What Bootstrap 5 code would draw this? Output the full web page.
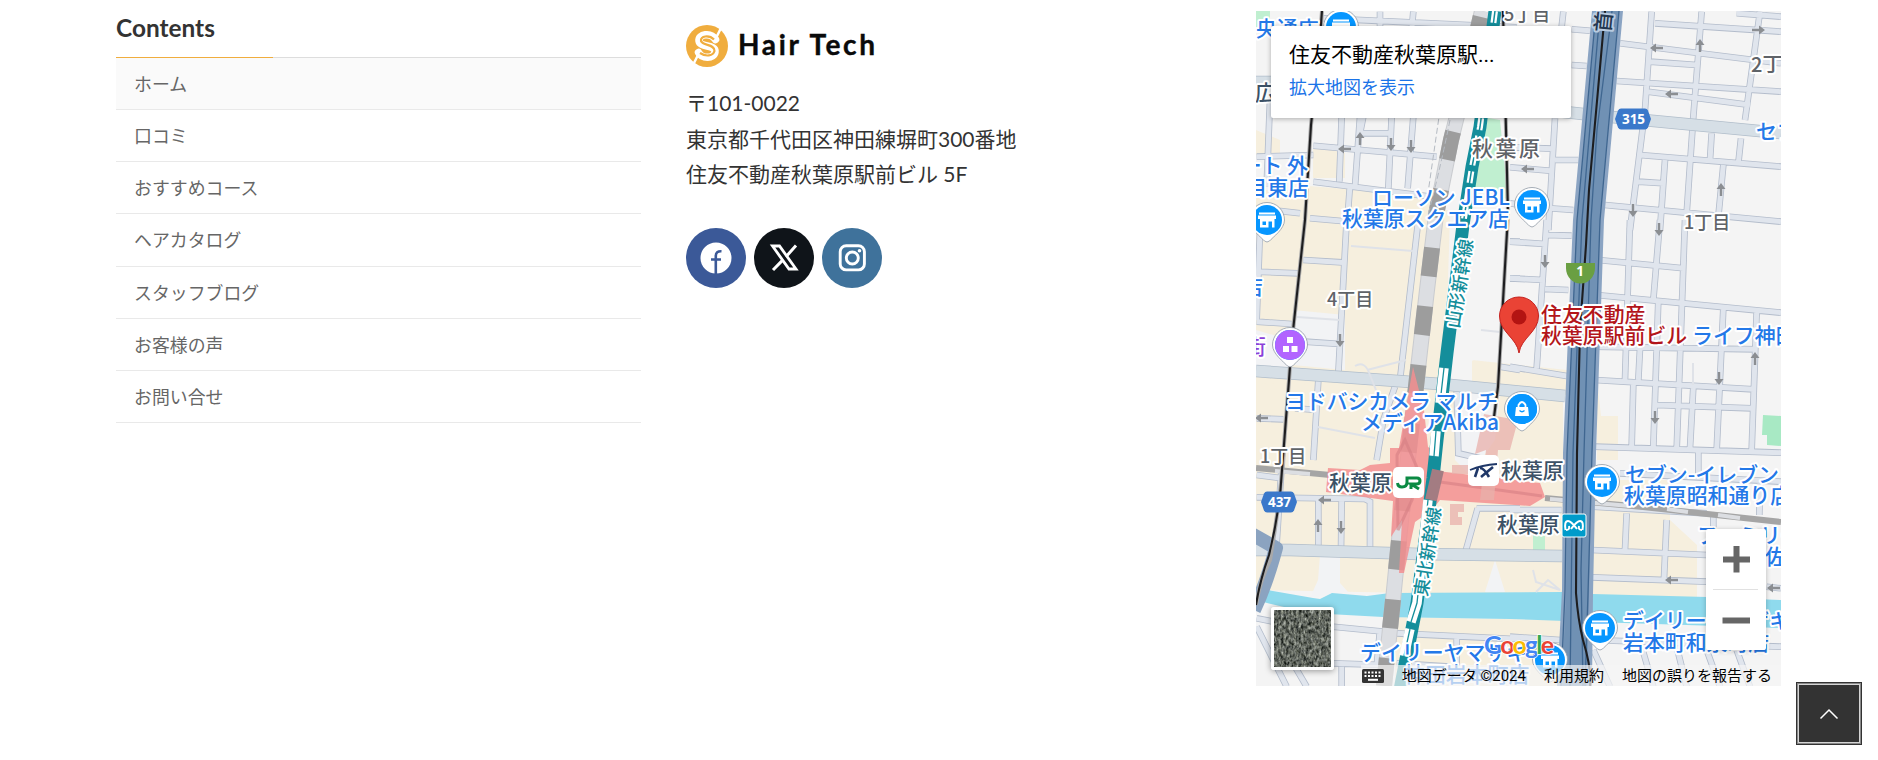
<!DOCTYPE html>
<html lang="ja">
<head>
<meta charset="utf-8">
<meta name="viewport" content="width=device-width, initial-scale=1">
<title>Hair Tech</title>
<link href="https://cdn.jsdelivr.net/npm/bootstrap@5.3.0/dist/css/bootstrap.min.css" rel="stylesheet">
<style>
body{font-family:Lato,"Noto Sans CJK JP",sans-serif;color:#333;font-size:21px;height:760px;overflow:hidden}
.site-foot{width:1710px;margin-left:93.5px;--bs-gutter-x:45px}
.foot-title{font-size:24.4px;font-weight:700;height:58px;line-height:1;padding-top:16px;border-bottom:1px solid #ddd;position:relative;margin:0}
.foot-title::after{content:"";position:absolute;left:0;bottom:-1px;width:30%;height:1px;background:#f0ad3e}
.menu-list .nav-link{font-size:17.9px;color:#666;height:52.15px;line-height:53px;padding:0 18px;border-bottom:1px solid #e9e9e9}
.menu-list .nav-link.active{background:#fafafa}
.addr{line-height:35.6px;margin:17px 0 36px}
.sns a{width:60px;height:60px}
.map-box{height:675px;margin-top:11px;width:525px;font-family:Roboto,"Noto Sans CJK JP",sans-serif}
.info-card{left:15px;top:15px;width:300px;height:92px;padding:14px 18px;box-shadow:0 1px 5px rgba(0,0,0,.3);border-radius:2px;line-height:30px;color:#000}
.info-card a{font-size:18px;color:#1a73e8;line-height:36px}
.zoom-ctl{left:450px;top:518px;width:60px;height:121px;box-shadow:0 1px 5px rgba(0,0,0,.25);border-radius:2px}
.zoom-ctl hr{width:45px;margin:0;opacity:1;border-color:#e1e1e1}
.sat{left:15px;top:596px;width:63px;height:63px;border:3px solid #fff;border-radius:3px;box-shadow:0 1px 6px rgba(0,0,0,.4)}
.map-foot{right:0;bottom:0;height:21px;width:420px;background:rgba(245,245,245,.7);font-size:15px;color:#000;line-height:22px;padding-right:9px;gap:18px}
.to-top{left:1796px;top:682px;width:66px;height:63px;background:#333;border:1px solid #333;box-shadow:inset 0 0 0 1px #888,inset 0 0 0 2px #d5d5d5}
.lb text{font-family:"Noto Sans CJK JP",sans-serif;font-weight:500;font-size:20.9px;paint-order:stroke;stroke:#fff;stroke-width:4px;stroke-linejoin:round}
.poi{fill:#2378e8}.chome{fill:#5f6368}.stn{fill:#3c5166}.dest{fill:#b3151a}.teal{fill:#148e9b}
#minor path{vector-effect:non-scaling-stroke}
</style>
</head>
<body>
<div class="row site-foot">
  <div class="col-4">
    <h3 class="foot-title">Contents</h3>
    <nav class="nav flex-column menu-list">
      <a class="nav-link active" href="#">ホーム</a>
      <a class="nav-link" href="#">口コミ</a>
      <a class="nav-link" href="#">おすすめコース</a>
      <a class="nav-link" href="#">ヘアカタログ</a>
      <a class="nav-link" href="#">スタッフブログ</a>
      <a class="nav-link" href="#">お客様の声</a>
      <a class="nav-link" href="#">お問い合せ</a>
    </nav>
  </div>
  <div class="col-4">
    <svg class="d-block" style="margin-top:24px" width="200" height="44" viewBox="0 0 200 44">
      <circle cx="21" cy="22" r="21" fill="#f0ad3e"/>
      <path d="M35 4L30 14M12 31L7 41" fill="none" stroke="#fff" stroke-width="2.500"/>
      <path d="M29.500 15.500C25 8 12 10 13 17C14 24 30 20 29 28C28 35 16 35 12.500 28.500" fill="none" stroke="#fff" stroke-width="7.500" stroke-linecap="round"/>
      <path d="M28 15.500C23 10.500 14 12 15 17C17 22 29 20 28.500 27C27 32 20 33 14 29" fill="none" stroke="#f0ad3e" stroke-width="2.200"/>
      <text x="52" y="31" font-size="28" font-weight="700" fill="#0a0a0a" stroke="#0a0a0a" stroke-width=".4" textLength="137">Hair Tech</text>
    </svg>
    <p class="addr">〒101-0022<br>東京都千代田区神田練塀町300番地<br>住友不動産秋葉原駅前ビル 5F</p>
    <div class="d-flex sns" style="gap:8px">
      <a href="#" class="rounded-circle" style="background:#3b5998"><svg class="d-block" width="60" height="60"><circle cx="30" cy="30" r="15.500" fill="#fff"/><path d="M29.800 46V28Q29.800 23 35.500 23.300M25 31.500H35" fill="none" stroke="#3b5998" stroke-width="2.600"/></svg></a>
      <a href="#" class="rounded-circle" style="background:#0f1419"><svg class="d-block" width="60" height="60"><path d="M42 17.500L32 28.700M28.200 32.600L19 42" stroke="#fff" stroke-width="3"/><path d="M18.500 18H25.500L42 41H35Z" fill="none" stroke="#fff" stroke-width="2.800"/></svg></a>
      <a href="#" class="rounded-circle" style="background:#3f729b"><svg class="d-block" width="60" height="60"><g fill="none" stroke="#fff" stroke-width="2.900"><rect x="18.200" y="17.700" width="24.200" height="24.200" rx="6"/><circle cx="30.300" cy="30" r="6"/></g><circle cx="37.500" cy="22.800" r="1.800" fill="#fff"/></svg></a>
    </div>
  </div>
  <div class="col-4">
    <div class="map-box position-relative overflow-hidden">
      <svg class="d-block" width="525" height="675" viewBox="1256 11 525 675">
        <defs>
          <g id="minor" fill="none">
            <path transform="translate(1250 0) scale(.33333)" d="M220 55L800 82M390 35V90M490 35L485 90M190 437L560 470M190 545L545 590M335 400H430M340 350L330 400M275 350L268 545M330 350L315 560M425 350L415 565M490 350L473 565M20 470L190 465M60 300L50 560M300 555L290 690M20 625L150 640M180 655L300 665"/>
            <path transform="translate(1510 0) scale(.33333)" d="M425 35L405 330L360 690M575 35L550 350L530 640M750 35L705 360M435 70L813 95M680 40L813 50M330 130L813 190M420 185L560 195M320 243L813 275M415 275L720 315M390 465L813 500M605 400L600 480M693 415L685 490M465 480L450 690M640 495L625 650M385 545L460 550M285 615L813 665M160 35L155 80M135 355L115 690M135 480H205M0 502L120 512M120 625L190 630M185 195L230 198M185 88L240 92M0 442L130 446M0 610L30 615"/>
            <path transform="translate(1250 220) scale(.33333)" d="M30 30L20 300M290 0L265 460M505 0L450 480M160 120L290 128M20 155L145 160M20 305L125 312M165 365L270 372M20 595L100 598M205 480L190 720M135 565L200 570M780 175H810M750 440L810 450M780 65H810M435 500L400 600L380 720M620 510L625 700L690 715"/>
            <path transform="translate(1510 220) scale(.33333)" d="M110 0L80 445M360 0L345 480M450 0L430 240M445 240L430 680M525 0L500 690M265 120L520 145M260 225L813 278M0 65L105 72M0 175L100 180M110 45L185 47M105 207L175 210M0 440L170 468M250 380L740 388M255 480L730 508M255 680L813 698M440 555L725 565M740 275L725 690M640 265L620 690M550 500L540 685M370 490L365 680M390 385L385 480"/>
            <path transform="translate(1250 450) scale(.33333)" d="M205 148V300M275 150L273 300M360 300V155L345 147L20 142M683 175L648 300M680 175H810M98 0L80 280M20 75L95 85M250 530L405 545M250 640L400 645M390 540L380 650M275 650V710M440 550L810 568M20 530L110 710M100 590L170 710M20 505L70 515M440 640L600 650M620 560V700"/>
            <path transform="translate(1510 450) scale(.33333)" d="M565 0V80M330 70L813 95M250 170L590 190M350 190L345 300M245 300L590 315M470 210L462 385M245 382L590 395M250 570L813 590M395 590L430 710M500 590L530 710M590 600L630 710M680 600L720 710M770 410L813 415M610 200V240M750 100L748 195M0 180H155M250 600L300 710M0 560L150 570"/>
          </g>
          <g id="major" fill="none"><path d="M1256 371L1440 384L1565 396M1256 550H1290L1420 554L1562 556M1612 117L1781 133M1520 107L1583 114M1256 82H1275"/></g>
          <g id="shop"><path d="M-17.500 0A17.500 17.500 0 1 1 17.500 0C17.500 9 6 17 2.500 21Q0 23-2.500 21C-6 17-17.500 9-17.500 0Z" fill="#fff" stroke="#8f99a5" stroke-width=".8"/><circle r="15" fill="#0696ff"/><path d="M-8-7.500H8V-5.500H-8ZM-9-4.500H9V-1H7.500V7.500H5V1.500H1.500V7.500H-7V-1H-9Z" fill="#fff"/><path d="M-4.500 1.500H-1V5H-4.500Z" fill="#0696ff"/></g>
          <path id="arr" d="M-6-1.200H1V-4.500L7 0L1 4.500V1.200H-6Z" fill="#8b8e92"/>
          <path id="hex" d="M-12-10.500H12Q14-10.500 15-8.500L18 0L15 8.500Q14 10.500 12 10.500H-12Q-14 10.500-15 8.500L-18 0L-15-8.500Q-14-10.500-12-10.500Z" fill="#3a78ca"/>
        </defs>
        <rect x="1256" y="11" width="525" height="675" fill="#f4f4f4"/>
        <g fill="#f6efde">
          <path d="M1256 130L1280 140V155H1256ZM1313 146L1345 153V178H1313ZM1308 186L1440 196L1428 345L1415 375L1340 360L1345 220H1256V190H1300ZM1256 210H1450V370L1430 390H1256ZM1430 250L1444 260L1436 345H1425Z"/>
          <path d="M1256 383L1440 388L1563 400V596L1256 590ZM1472 360L1567 370V395L1472 385ZM1597 380L1601 416H1618V460H1597Z"/>
          <path d="M1594 480H1670V520L1697 545V597H1592ZM1395 617L1560 620V686H1395Z"/>
        </g>
        <path d="M1450 214H1500L1492 350L1470 362V385L1445 382Z" fill="#f4f4f4"/>
        <path d="M1293 310L1345 315V370L1293 365ZM1256 330L1290 340V372H1256ZM1455 390L1500 395L1495 440L1470 475L1455 460ZM1320 555H1340V583L1348 592L1310 598L1318 580ZM1495 560L1505 592H1485Z" fill="#f2f3f5"/>
        <path d="M1488 118L1500 120L1508 200L1490 190H1474Z" fill="#c0efd0"/><path d="M1256 11H1270V18L1256 28ZM1533 530H1545V552H1533Z" fill="#c0efd0"/>
        <path d="M1763 415L1781 416V446L1767 445V435H1762Z" fill="#a8e9c4"/>
        <path d="M1257 587L1267 590L1313 598L1320 599L1332 593L1367 596L1390 593L1562 592L1593 594L1707 597L1781 600V628L1593 622L1510 619L1383 617L1310 613L1267 603L1256 600Z" fill="#8fdaed"/>
        <use href="#minor" stroke="#b3bccb" stroke-width="6.600"/>
        <use href="#minor" stroke="#e0e5ed" stroke-width="5"/>
        <use href="#major" stroke="#b0bdca" stroke-width="12.500"/>
        <use href="#major" stroke="#d6dfe6" stroke-width="11"/>
        <path d="M1250 533L1276 548Q1266 585 1254 610" stroke="#8ba3c0" stroke-width="14" stroke-linejoin="round" fill="none"/>
        <g fill="none" stroke="#dfe2e8" stroke-width="2"><path d="M1351 246L1413 251M1297 317L1340 320M1355 366Q1365 360 1370 375L1376 390M1367 370L1406 360M1318 427L1375 438M1533 570L1536 582L1560 590L1548 580L1536 592M1693 363V385M1481 330L1500 332"/></g>
        <!-- surface railways -->
        <path d="M1482 11L1466 80L1451 140L1436 215L1427 290L1419 360L1410 440L1400 530L1393 600L1384 686" fill="none" stroke="#c9cbcf" stroke-width="16"/>
        <path d="M1482 11L1466 80L1451 140L1436 215L1427 290L1419 360L1410 440L1400 530L1393 600L1384 686" fill="none" stroke="#dcdee2" stroke-width="14"/>
        <path d="M1482 11L1466 80L1451 140L1436 215L1427 290L1419 360L1410 440L1400 530L1393 600L1384 686" fill="none" stroke="#9d9d9d" stroke-width="16" stroke-dasharray="29 30" stroke-dashoffset="-6"/>
        <path d="M1450 120Q1440 170 1428 215M1440 110L1427 200" fill="none" stroke="#b4bac2" stroke-width="1" stroke-dasharray="6 3"/>
        <path d="M1256 468L1330 475L1400 483M1545 498L1643 507L1781 522" fill="none" stroke="#a5a5a5" stroke-width="6"/>
        <path d="M1275 471L1310 474M1550 499L1630 506M1667 509L1688 512M1718 515L1740 518" fill="none" stroke="#dcdee2" stroke-width="4"/>
        <!-- station buildings -->
        <path d="M1413 367L1424 410L1428 447L1433 450L1437 471L1540 483L1545 497L1530 506L1440 500L1432 510L1415 522L1404 573H1399L1402 520L1391 537L1393 501L1326 492L1328 468L1360 470L1370 465L1390 463V448H1399Z" fill="#f38f90" opacity=".85"/>
        <path d="M1397 455L1405 440L1418 470L1412 500L1398 530ZM1440 482L1542 496" fill="none" stroke="#d67f83" stroke-width="3" opacity=".6"/>
        <path d="M1484 414L1518 420L1510 450H1498L1494 500H1480L1486 450L1475 454ZM1452 465H1468V474H1452ZM1450 504H1464V512H1458V517H1462V525H1450Z" fill="#e8b0ab" opacity=".75"/>
        <!-- Shinkansen -->
        <path d="M1495 11L1480 127L1472 167L1463 225L1447 353L1437 440L1433 478L1417 603L1400 690" fill="none" stroke="#148e9b" stroke-width="13"/>
        <path d="M1495 11L1480 127L1472 167L1463 225" fill="none" stroke="#fff" stroke-width="6" stroke-dasharray="12 6"/>
        <path d="M1495 11L1480 127L1472 167L1463 225" fill="none" stroke="#148e9b" stroke-width="1.500"/>
        <path d="M1444 368L1440 403M1436 431L1434 456M1428 500L1417 603L1411 622M1410 629L1404 656" fill="none" stroke="#fff" stroke-width="9.500"/>
        <path d="M1444 368L1440 403M1436 431L1434 456M1428 500L1417 603L1411 622M1410 629L1404 656" fill="none" stroke="#148e9b" stroke-width="1.300"/>
        <path d="M1438 470L1431 500" stroke="#a37c82" stroke-width="12"/>
        <!-- expressway -->
        <path d="M1592 11H1623L1604 220L1596 453L1593 594L1592 686H1557L1562 590L1563 453L1573 220Z" fill="#8ba4c3"/>
        <path d="M1596 11H1619L1600 220L1592 453L1589 594L1587 686H1562L1566 590L1567 453L1577 220Z" fill="#7091b4"/>
        <path d="M1596 11L1577 220L1567 453L1565 590L1561 686M1619 11L1600 220L1592 453L1588 594L1585 686M1600 11L1582 220L1573 453L1570 686M1612 11L1597 130L1591 220L1584 453L1581 570L1583 686" fill="none" stroke="#3f6690" stroke-width="1.300"/>
        <path d="M1322 11L1319 50L1311 125L1305 220L1292 340L1289 380L1282 470Q1280 500 1270 560Q1260 580 1256 605M1503 11L1506 130L1508 215L1498 387L1494 417" fill="none" stroke="#a9a9a9" stroke-width="4"/>
        <path d="M1322 11L1319 50L1311 125L1305 220L1292 340L1289 380L1282 470Q1280 510 1269 555Q1260 580 1256 605M1503 11L1506 130L1508 215L1498 387L1494 417M1605 11L1598 90L1589 190L1586 245L1580 330L1577 453L1576 593Q1578 620 1583 640Q1592 670 1590 686" fill="none" stroke="#1d1d1f" stroke-width="2.100"/>
        <g>
          <use href="#arr" transform="translate(1345 149) rotate(180)"/><use href="#arr" transform="translate(1360 139) rotate(-90)"/><use href="#arr" transform="translate(1391 144) rotate(90)"/><use href="#arr" transform="translate(1411 146) rotate(90)"/>
          <use href="#arr" transform="translate(1657 48) rotate(180)"/><use href="#arr" transform="translate(1700 46) rotate(-90)"/><use href="#arr" transform="translate(1758 30)"/><use href="#arr" transform="translate(1672 94) rotate(180)"/><use href="#arr" transform="translate(1528 169) rotate(180)"/><use href="#arr" transform="translate(1721 190) rotate(-90)"/><use href="#arr" transform="translate(1633 210) rotate(90)"/><use href="#arr" transform="translate(1659 229) rotate(90)"/>
          <use href="#arr" transform="translate(1545 261) rotate(90)"/><use href="#arr" transform="translate(1340 340) rotate(90)"/><use href="#arr" transform="translate(1262 418) rotate(180)"/><use href="#arr" transform="translate(1719 378) rotate(90)"/><use href="#arr" transform="translate(1755 359) rotate(-90)"/><use href="#arr" transform="translate(1655 417) rotate(90)"/>
          <use href="#arr" transform="translate(1325 500) rotate(180)"/><use href="#arr" transform="translate(1318 526) rotate(-90)"/><use href="#arr" transform="translate(1341 527) rotate(90)"/><use href="#arr" transform="translate(1672 580) rotate(180)"/><use href="#arr" transform="translate(1774 588) rotate(180)"/>
        </g>
        <use href="#shop" x="1532" y="205"/><use href="#shop" x="1267" y="220"/><use href="#shop" x="1602" y="482"/><use href="#shop" x="1600" y="628"/><use href="#shop" x="1550" y="660"/><use href="#shop" x="1341" y="27"/>
        <g transform="translate(1522 409)"><use href="#shop"/><circle r="15" fill="#0696ff"/><path d="M-6-2H6L7 7H-7Z" fill="#fff"/><path d="M-3.500-2V-4Q0-10 3.500-4V-2" fill="none" stroke="#fff" stroke-width="1.800"/><path d="M-2.500 1.500Q0 4 2.500 1.500" fill="none" stroke="#0696ff" stroke-width="1.300"/></g>
        <g transform="translate(1290 345)"><use href="#shop"/><circle r="15" fill="#b264ff"/><path d="M-3-8H3V-2H-3ZM-7 1H-1V7H-7ZM1.500 1H7.500V7H1.500Z" fill="#fff"/></g>
        <g class="lb">
          <g class="poi">
            <text x="1256" y="36">央通店</text><text x="1308" y="173" text-anchor="end">ート 外</text><text x="1309" y="195" text-anchor="end">目東店</text>
            <text x="1372" y="205" textLength="138">ローソン JEBL</text><text x="1342" y="226">秋葉原スクエア店</text>
            <text x="1263" y="294" text-anchor="end">店</text>
            <text x="1285" y="409" textLength="213">ヨドバシカメラ マルチ</text><text x="1361" y="430" textLength="138">メディアAkiba</text>
            <text x="1625" y="482" textLength="154">セブン-イレブン</text><text x="1624" y="503">秋葉原昭和通り店</text>
            <text x="1756" y="139">セブ</text><text x="1692" y="343">ライフ神田</text>
            <text x="1697" y="543">ファミリー</text><text x="1765" y="564">佐</text>
            <text x="1623" y="628">デイリーヤマザキ</text><text x="1623" y="650">岩本町和泉町店</text>
            <text x="1360" y="660">デイリーヤマザキ</text><text x="1404" y="682">神田岩本町店</text>
          </g>
          <text x="1266" y="354" text-anchor="end" style="fill:#8b3fd9">街</text>
          <g class="chome">
            <text x="1504" y="21" style="font-size:18px">5丁目</text><text x="1751" y="72" style="font-size:20px">2丁目</text><text x="1684" y="229" style="font-size:18px">1丁目</text><text x="1327" y="306" style="font-size:18px">4丁目</text><text x="1260" y="463" style="font-size:18px">1丁目</text>
            <text x="1472" y="156" textLength="68">秋葉原</text>
          </g>
          <g class="stn"><text x="1255" y="100">広</text><text x="1329" y="490">秋葉原</text><text x="1501" y="478">秋葉原</text><text x="1497" y="532">秋葉原</text><text transform="translate(1610 33) rotate(-84)" style="stroke:#b9cbe0;fill:#23364f">首</text></g>
          <g class="dest"><text x="1541" y="322">住友不動産</text><text x="1541" y="343">秋葉原駅前ビル</text></g>
          <g class="teal"><text transform="translate(1459 329) rotate(-81)" style="font-size:18px" textLength="90">山形新幹線</text><text transform="translate(1427 597) rotate(-81)" style="font-size:18px" textLength="90">東北新幹線</text></g>
        </g>
        <g font-family="Noto Sans, sans-serif" font-weight="700" font-size="13.500" fill="#fff" text-anchor="middle">
          <use href="#hex" x="1633" y="119"/><text x="1633.500" y="124">315</text><use href="#hex" x="1279" y="502"/><text x="1279.500" y="507">437</text>
          <path d="M1566 263H1595V268A14.500 15.500 0 0 1 1566 268Z" fill="#6a9f42"/><text x="1580" y="276">1</text>
        </g>
        <path d="M1519 353C1517 338 1499.500 332 1499.500 316A19.500 19 0 0 1 1538.500 316C1538.500 332 1521 338 1519 353Z" fill="#ea4335" stroke="#c5221f" stroke-width="1"/><circle cx="1519" cy="317" r="7.500" fill="#b31412"/>
        <rect x="1393" y="467" width="31" height="31" rx="5" fill="#fff"/><path d="M1397.500 483Q1398 487 1402 487Q1407 487 1407 482V478H1417Q1420 478 1420 481Q1420 484 1416 484H1411L1419 489M1411 484V489" fill="none" stroke="#0b8a43" stroke-width="3"/>
        <rect x="1468" y="455" width="31" height="31" rx="5" fill="#fff"/><path d="M1470 470Q1482 465 1497 464" fill="none" stroke="#1f3768" stroke-width="1.800"/><path d="M1478 468L1475 477M1480 468Q1484 468 1489 477M1493 467L1481 477" fill="none" stroke="#1f3768" stroke-width="2.600"/>
        <rect x="1562" y="514" width="24" height="23" rx="2" fill="#009bca" stroke="#fff"/><path d="M1565.500 530Q1564 521 1568 521Q1571 521 1577 529M1582.500 530Q1584 521 1580 521Q1577 521 1571 529M1566 530Q1570 530 1569 526M1582 530Q1578 530 1579 526" fill="none" stroke="#fff" stroke-width="2"/>
        <g font-family="Lato, sans-serif" font-size="25" font-weight="700" stroke="#fff" stroke-width="1.500" paint-order="stroke"><text x="1484" y="654" textLength="70"><tspan fill="#4285f4">G</tspan><tspan fill="#ea4335">o</tspan><tspan fill="#fbbc04">o</tspan><tspan fill="#4285f4">g</tspan><tspan fill="#34a853">l</tspan><tspan fill="#ea4335">e</tspan></text></g>
      </svg>
      <div class="info-card position-absolute bg-white"><div class="text-truncate">住友不動産秋葉原駅...</div><a href="#" class="d-block text-decoration-none">拡大地図を表示</a></div>
      <div class="sat position-absolute overflow-hidden"><svg class="d-block" width="57" height="57"><filter id="city" x="0" y="0" width="100%" height="100%" color-interpolation-filters="sRGB"><feTurbulence type="fractalNoise" baseFrequency=".4 .25" numOctaves="3" seed="4"/><feColorMatrix values=".9 .3 0 0 -.22 .9 .3 0 0 -.2 .85 .3 .05 0 -.23 0 0 0 0 1"/></filter><rect width="57" height="57" filter="url(#city)"/></svg></div>
      <div class="zoom-ctl position-absolute bg-white d-flex flex-column align-items-center justify-content-between">
        <svg width="60" height="60"><path d="M17 30.500H44M30.500 17V43.500" stroke="#666" stroke-width="6"/></svg><hr>
        <svg width="60" height="60"><path d="M16.500 30.500H44" stroke="#666" stroke-width="6"/></svg>
      </div>
      <div class="map-foot position-absolute d-flex justify-content-end text-nowrap">
        <svg width="22" height="14" style="margin-top:4px" viewBox="0 0 22 14"><rect width="22" height="14" rx="1.500" fill="#333"/><path d="M2.500 3.500H20M2.500 7H20" stroke="#fff" stroke-width="2" stroke-dasharray="2 1.500"/><path d="M6 10.800H16" stroke="#fff" stroke-width="2"/></svg>
        <span>地図データ ©2024</span><span>利用規約</span><span>地図の誤りを報告する</span>
      </div>
    </div>
  </div>
</div>
<a href="#" class="to-top position-absolute d-flex align-items-center justify-content-center"><svg width="20" height="12"><path d="M1.500 10.500L10 2L18.500 10.500" fill="none" stroke="#fff" stroke-width="1.500"/></svg></a>
<script src="https://cdn.jsdelivr.net/npm/bootstrap@5.3.0/dist/js/bootstrap.bundle.min.js"></script>
</body>
</html>
